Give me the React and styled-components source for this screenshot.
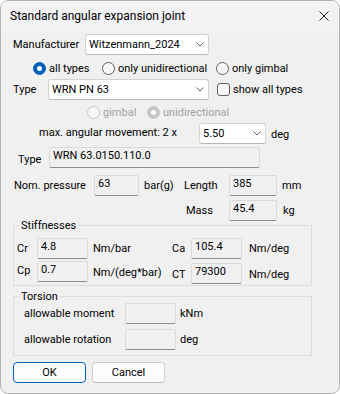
import React from 'react';
import styled, { createGlobalStyle } from 'styled-components';

const Global = createGlobalStyle`
  html, body { margin: 0; padding: 0; background: #ffffff; }
  body { width: 340px; height: 394px; overflow: hidden; }
  * { box-sizing: border-box; }
`;

const Window = styled.div`
  width: 340px;
  height: 394px;
  border: 1px solid #b4b4b4;
  border-radius: 8px;
  background: #f0f0f0;
  overflow: hidden;
  display: flex;
  flex-direction: column;
  font-family: Roboto, "Liberation Sans", sans-serif;
  font-size: 11px;
  color: #000;
`;

const TitleBar = styled.div`
  height: 30px;
  flex: none;
  background: #f3f3f5;
  display: flex;
  align-items: center;
  justify-content: space-between;
  padding: 0 10px 0 9px;
  font-size: 12px;
`;

const CloseBtn = styled.span`
  width: 10px;
  height: 10px;
  display: flex;
`;

const Body = styled.div`
  flex: 1;
  display: flex;
  flex-direction: column;
`;

const Row = styled.div`
  display: flex;
  align-items: center;
  flex: none;
  height: ${p => p.$h || 21}px;
  margin-top: ${p => p.$mt || 0}px;
  padding-left: ${p => p.$pl || 0}px;
`;

const Text = styled.span`
  flex: none;
  white-space: nowrap;
  width: ${p => (p.$w ? `${p.$w}px` : 'auto')};
  margin-left: ${p => p.$ml || 0}px;
  margin-top: ${p => p.$dy || 0}px;
  color: ${p => (p.$disabled ? '#a2a2a2' : '#000')};
  line-height: 13px;
`;

const Combo = styled.div`
  width: ${p => p.$w}px;
  height: 21px;
  flex: none;
  background: #ffffff;
  border: 1px solid #d3d3d3;
  border-bottom-color: #b9b9b9;
  border-radius: 3px;
  display: flex;
  align-items: center;
  justify-content: space-between;
  padding: 0 4px 0 3px;
  line-height: 13px;
`;

const Chevron = () => (
  <svg width="8" height="5" viewBox="0 0 8 5">
    <path d="M0.5 0.5 L4 4 L7.5 0.5" fill="none" stroke="#5f5f5f" strokeWidth="1" />
  </svg>
);

const Field = styled.div`
  width: ${p => p.$w}px;
  height: 21px;
  flex: none;
  margin-left: ${p => p.$ml || 0}px;
  margin-top: ${p => p.$dy || 0}px;
  background: #f0f0f0;
  border: 1px solid #dadada;
  border-bottom-color: #8c8c8c;
  border-radius: 2px;
  padding: 1px 0 0 3px;
  line-height: 13px;
  white-space: nowrap;
`;

const RadioItem = styled.label`
  display: flex;
  align-items: center;
  gap: 3px;
  flex: none;
  width: ${p => (p.$w ? `${p.$w}px` : 'auto')};
  color: ${p => (p.$disabled ? '#a2a2a2' : '#000')};
  line-height: 13px;
`;

const RadioCircle = styled.span`
  width: 13px;
  height: 13px;
  border-radius: 50%;
  flex: none;
  display: flex;
  align-items: center;
  justify-content: center;
  border: 1px solid ${p => (p.$disabled ? '#c6c6c6' : p.$checked ? '#005fb8' : '#5f5f5f')};
  background: ${p => (p.$checked ? (p.$disabled ? '#c6c6c6' : '#005fb8') : '#f7f7f7')};
  &::after {
    content: '';
    display: ${p => (p.$checked ? 'block' : 'none')};
    width: 5px;
    height: 5px;
    border-radius: 50%;
    background: #ffffff;
  }
`;

const CheckBox = styled.span`
  width: 13px;
  height: 13px;
  flex: none;
  border: 1px solid #5f5f5f;
  border-radius: 3px;
  background: #f9f9f9;
  margin-left: ${p => p.$ml || 0}px;
`;

const Group = styled.div`
  position: relative;
  flex: none;
  margin: ${p => p.$mt}px 0 0 12px;
  width: 299px;
  height: ${p => p.$h}px;
  border: 1px solid #dcdcdc;
  padding-top: ${p => p.$pt}px;
  display: flex;
  flex-direction: column;
`;

const Legend = styled.span`
  position: absolute;
  top: -7px;
  left: 5px;
  padding: 0 2px;
  background: #f0f0f0;
  line-height: 13px;
`;

const Button = styled.button`
  width: 73px;
  height: 21px;
  flex: none;
  margin-left: ${p => p.$ml || 0}px;
  font: inherit;
  color: #000;
  background: #fdfdfd;
  border: 1px solid ${p => (p.$default ? '#005fb8' : '#d0d0d0')};
  border-bottom-color: ${p => (p.$default ? '#005fb8' : '#bdbdbd')};
  border-radius: 4px;
  padding: 0;
  line-height: 13px;
`;

const Radio = ({ w, checked, disabled, children }) => (
  <RadioItem $w={w} $disabled={disabled}>
    <RadioCircle $checked={checked} $disabled={disabled} />
    <span>{children}</span>
  </RadioItem>
);

export default function App() {
  return (
    <>
      <Global />
      <Window>
        <TitleBar>
          <span>Standard angular expansion joint</span>
          <CloseBtn>
            <svg width="10" height="10" viewBox="0 0 10 10">
              <path d="M0.5 0.5 L9.5 9.5 M9.5 0.5 L0.5 9.5" stroke="#1b1b1b" strokeWidth="1" fill="none" />
            </svg>
          </CloseBtn>
        </TitleBar>
        <Body>
          <Row $mt={3} $pl={12}>
            <Text $w={72}>Manufacturer</Text>
            <Combo $w={124}>
              <span>Witzenmann_2024</span>
              <Chevron />
            </Combo>
          </Row>
          <Row $mt={6} $h={14} $pl={32}>
            <Radio w={69} checked>all types</Radio>
            <Radio w={114}>only unidirectional</Radio>
            <Radio>only gimbal</Radio>
          </Row>
          <Row $mt={4} $pl={12}>
            <Text $w={35}>Type</Text>
            <Combo $w={161}>
              <span>WRN PN 63</span>
              <Chevron />
            </Combo>
            <CheckBox $ml={8} />
            <Text $ml={3}>show all types</Text>
          </Row>
          <Row $mt={5} $h={14} $pl={86}>
            <Radio w={60} disabled>gimbal</Radio>
            <Radio disabled checked>unidirectional</Radio>
          </Row>
          <Row $mt={4} $pl={38}>
            <Text $w={160} $dy={-2}>max. angular movement: 2 x</Text>
            <Combo $w={67}>
              <span>5.50</span>
              <Chevron />
            </Combo>
            <Text $ml={5} $dy={2}>deg</Text>
          </Row>
          <Row $mt={3} $pl={17}>
            <Text $w={31} $dy={3}>Type</Text>
            <Field $w={211}>WRN 63.0150.110.0</Field>
          </Row>
          <Row $mt={7} $pl={13}>
            <Text $w={80}>Nom. pressure</Text>
            <Field $w={45}>63</Field>
            <Text $w={40} $ml={5}>bar(g)</Text>
            <Text $w={45}>Length</Text>
            <Field $w={48}>385</Field>
            <Text $ml={5}>mm</Text>
          </Row>
          <Row $mt={4} $pl={185}>
            <Text $w={43}>Mass</Text>
            <Field $w={48}>45.4</Field>
            <Text $ml={6}>kg</Text>
          </Row>
          <Group $mt={4} $h={61} $pt={12}>
            <Legend>Stiffnesses</Legend>
            <Row $pl={3}>
              <Text $w={20}>Cr</Text>
              <Field $w={51}>4.8</Field>
              <Text $w={79} $ml={5}>Nm/bar</Text>
              <Text $w={19}>Ca</Text>
              <Field $w={51}>105.4</Field>
              <Text $ml={7}>Nm/deg</Text>
            </Row>
            <Row $mt={2} $h={23} $pl={3}>
              <Text $w={20} $dy={-5}>Cp</Text>
              <Field $w={51} $dy={-2}>0.7</Field>
              <Text $w={79} $ml={5}>Nm/(deg*bar)</Text>
              <Text $w={19} $dy={3}>CT</Text>
              <Field $w={51} $dy={1}>79300</Field>
              <Text $ml={7} $dy={3}>Nm/deg</Text>
            </Row>
          </Group>
          <Group $mt={10} $h={60} $pt={6}>
            <Legend>Torsion</Legend>
            <Row $pl={10}>
              <Text $w={101}>allowable moment</Text>
              <Field $w={51} />
              <Text $ml={4}>kNm</Text>
            </Row>
            <Row $mt={5} $pl={10}>
              <Text $w={101}>allowable rotation</Text>
              <Field $w={51} />
              <Text $ml={4}>deg</Text>
            </Row>
          </Group>
          <Row $mt={6} $pl={12}>
            <Button $default>OK</Button>
            <Button $ml={6}>Cancel</Button>
          </Row>
        </Body>
      </Window>
    </>
  );
}
